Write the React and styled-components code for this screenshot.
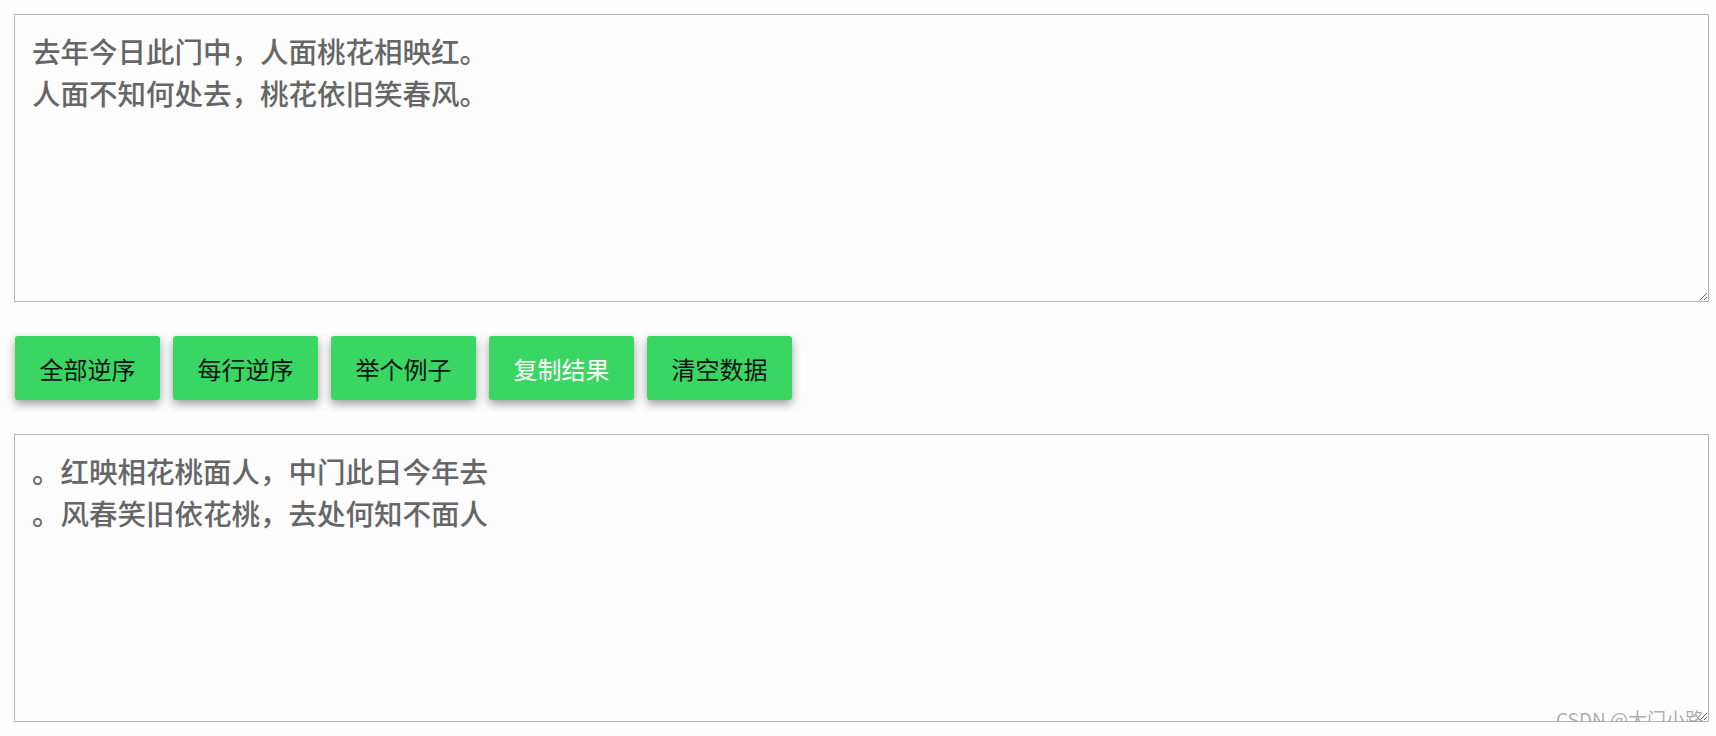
import React, { useState } from 'react'
import styled, { createGlobalStyle } from 'styled-components';

const GlobalStyle = createGlobalStyle`
    body {
        margin: 0;
        background-color: #fdfdfd;
        font-family: 'Noto Sans CJK SC', 'Noto Sans', sans-serif;
    }
`;

const source = '去年今日此门中，人面桃花相映红。\n人面不知何处去，桃花依旧笑春风。';

const reverseLines = (text) =>
    text.split('\n').map((line) => line.split('').reverse().join('')).join('\n');

const buttons = [
    { label: '全部逆序', light: false },
    { label: '每行逆序', light: false },
    { label: '举个例子', light: false },
    { label: '复制结果', light: true },
    { label: '清空数据', light: false },
];

const App = () => {
    const [input, setInput] = useState(source);
    const [output, setOutput] = useState(reverseLines(source));

    return (
        <>
        <GlobalStyle/>
        <StPage>
            <StArea value={input} onChange={(e) => setInput(e.target.value)}/>
            <StToolbar>
                {buttons.map((b) => (
                    <StButton key={b.label} $light={b.light}>{b.label}</StButton>
                ))}
            </StToolbar>
            <StArea value={output} onChange={(e) => setOutput(e.target.value)}/>
            <StMark>CSDN @大门小路</StMark>
        </StPage>
        </>
    )
}

const StPage = styled.div`
    position: relative;
    display: flex;
    flex-direction: column;
    gap: 34px;
    padding: 14px 7px 0 14px;
`;

const StArea = styled.textarea`
    box-sizing: border-box;
    width: 100%;
    height: 288px;
    padding: 15px 17px;
    border: 1px solid #b4b4b4;
    background-color: #fdfdfd;
    color: #666666;
    font-family: 'Noto Sans CJK SC', 'Noto Sans', sans-serif;
    font-weight: 500;
    font-size: 28.5px;
    line-height: 42px;
    outline: none;
`;

const StToolbar = styled.div`
    display: flex;
    gap: 13px;
    padding: 0 0 0 1px;
`;

const StButton = styled.button`
    display: flex;
    justify-content: center;
    align-items: center;
    width: 145px;
    height: 64px;
    padding: 0;
    border: none;
    border-radius: 3px;
    background-color: #3ad664;
    color: ${props => props.$light ? '#ffffff' : '#111111'};
    font-family: 'Noto Sans CJK SC', 'Noto Sans', sans-serif;
    font-size: 24px;
    box-shadow: 0 4px 10px rgba(0, 0, 0, 0.38);
    cursor: pointer;
`;

const StMark = styled.div`
    position: absolute;
    top: 706px;
    right: 12px;
    color: rgba(160, 160, 160, 0.85);
    font-family: 'Noto Sans CJK SC', 'Noto Sans', sans-serif;
    font-size: 19px;
    line-height: 26px;
    pointer-events: none;
`;

export default App
